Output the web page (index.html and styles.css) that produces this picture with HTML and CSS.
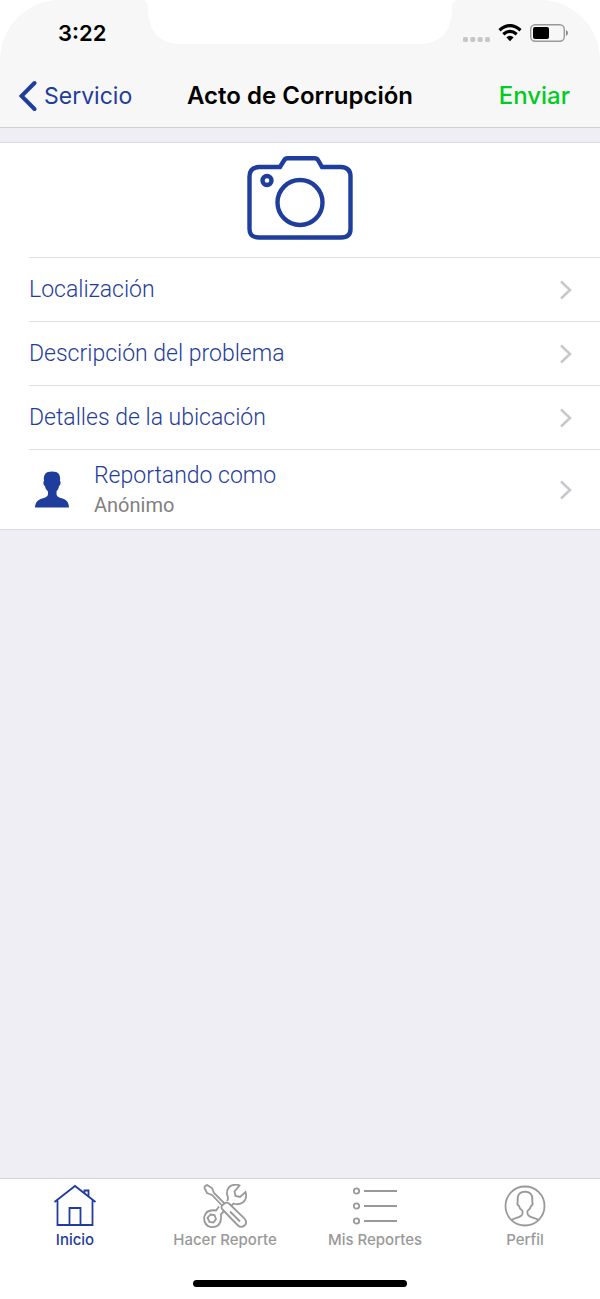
FILE: index.html
```html
<!DOCTYPE html>
<html lang="es">
<head>
<meta charset="utf-8">
<meta name="viewport" content="width=device-width, initial-scale=1">
<title>Acto de Corrupción</title>
<link rel="stylesheet" href="styles.css">
</head>
<body>
<header class="header">
  <svg class="notch" width="320" height="44" viewBox="0 0 320 44" aria-hidden="true"><path d="M0 0C6 0 8 3 8 9C8 30 19 44 40 44H280C301 44 312 30 312 9C312 3 314 0 320 0Z" fill="#fff"/></svg>
  <div class="status">
    <span class="time">3:22</span>
    <div class="indicators">
      <svg width="28" height="26" viewBox="0 0 28 26" fill="#c7c7c7" aria-hidden="true"><rect x="1" y="17" width="5" height="5" rx="1.5"/><rect x="8.3" y="17" width="5" height="5" rx="1.5"/><rect x="15.600" y="17" width="5" height="5" rx="1.5"/><rect x="23" y="17" width="5" height="5" rx="1.5"/></svg>
      <svg width="24" height="18" viewBox="0 0 24 18" fill="none" stroke="#000" stroke-width="3.2" aria-hidden="true"><path d="M1.5 6.2Q12-3 22.500 6.200M5.300 10.200Q12 4.600 18.700 10.200"/><path d="M8.300 13.300Q12 10.200 15.700 13.300L12 17.200Z" fill="#000" stroke="none"/></svg>
      <svg width="38" height="18" viewBox="0 0 38 18" aria-hidden="true"><rect x=".7" y=".7" width="33.600" height="16.600" rx="4.500" fill="none" stroke="#999" stroke-width="1.400"/><rect x="3" y="3" width="16" height="12" rx="2"/><path d="M36 6Q38 7 38 9T36 12Z" fill="#888"/></svg>
    </div>
  </div>
  <nav class="navbar">
    <a class="back" href="#"><svg width="18" height="32" viewBox="0 0 18 32" fill="none" stroke="#1f3d9c" stroke-width="4" stroke-linecap="round" stroke-linejoin="miter" aria-hidden="true"><path d="M15.500 3L2.500 16L15.500 29"/></svg>Servicio</a>
    <h1 class="title">Acto de Corrupción</h1>
    <button class="send" type="button">Enviar</button>
  </nav>
</header>
<main class="content">
  <section class="form">
    <button class="photo" type="button" aria-label="Agregar foto">
      <svg width="106" height="84" viewBox="0 0 106 84" fill="none" stroke="#1f3d9c" stroke-width="4.400" aria-hidden="true"><path d="M12 11H33L37 4.500Q38.300 2.300 40.500 2.300H67.500Q70 2.300 71.300 4.500L75 11H94Q103.500 11.500 103.500 20.500V73Q103.500 81.500 94 81.500H12Q2.500 81.500 2.500 73V20.500Q2.500 11.500 12 11Z"/><circle cx="53" cy="46.500" r="22.500"/><circle cx="20" cy="24.500" r="4.500"/></svg>
    </button>
    <ul class="list">
      <li><a class="row" href="#"><span class="label">Localización</span><svg class="chevron" viewBox="0 0 12 20" aria-hidden="true"><path d="M1 1.500L10 10L1 18.500"/></svg></a></li>
      <li><a class="row" href="#"><span class="label">Descripción del problema</span><svg class="chevron" viewBox="0 0 12 20" aria-hidden="true"><path d="M1 1.500L10 10L1 18.500"/></svg></a></li>
      <li><a class="row" href="#"><span class="label">Detalles de la ubicación</span><svg class="chevron" viewBox="0 0 12 20" aria-hidden="true"><path d="M1 1.500L10 10L1 18.500"/></svg></a></li>
      <li><a class="row row-user" href="#">
        <svg width="46" height="38" viewBox="0 0 46 38" fill="#1f3d9c" aria-hidden="true"><path d="M6 36.500C6.300 31 9 29 13 27.600C17 26.300 19 25.500 19 23V20.500C17 18.500 16.200 17 16 15C14.300 14.500 14 10.500 15 10C14.300 3.500 16.500 .5 23 .5S31.700 3.500 31 10C32 10.500 31.700 14.500 30 15C29.800 17 29 18.500 27.500 20.500V23C27.500 25.500 29.500 26.300 33.500 27.600C37.500 29 39.700 31 40 36.500Z"/></svg>
        <span class="person"><span class="label">Reportando como</span><span class="sub">Anónimo</span></span>
        <svg class="chevron" viewBox="0 0 12 20" aria-hidden="true"><path d="M1 1.500L10 10L1 18.500"/></svg></a></li>
    </ul>
  </section>
</main>
<footer class="footer">
  <nav class="tabs">
    <a class="tab active" href="#" aria-current="page"><svg width="44" height="44" viewBox="0 0 44 44" aria-hidden="true"><path d="M1.500 18L22 2L42.500 18M4.500 16.500V41H39.500V16.500M16.500 41V24H27.500V41M31.500 9V6.500H35.500V12" stroke-width="1.800"/></svg>Inicio</a>
    <a class="tab" href="#"><svg width="44" height="44" viewBox="0 0 44 44" aria-hidden="true"><path d="M1 3L4 1L9 4L11 9L21.500 19.500M1 3L4 9L9 11L19 21.500M19 21.500Q17.500 24 20 26L34.500 41Q38 44.500 41.500 41.500T41 34L26.500 20Q24 17.500 21.500 19.500ZM27 27.500L37 37.500M24 17Q26 14.500 24 10.500Q23.500 2 31 .8Q34 .3 36.500 1.500L31.500 7.500L32.500 12L37 13L42.500 8Q44.500 14 40.500 18Q36 21.500 30.500 19.500L29 21M16 22.500L13 26.500Q3 25 1.200 33Q.5 41 7.500 43Q17.500 44 18 34V30L21 27M7.500 30.500L11.500 31L13 35L10.500 38.500L6.500 38L4.500 34Z"/></svg>Hacer Reporte</a>
    <a class="tab" href="#"><svg width="44" height="44" viewBox="0 0 44 44" aria-hidden="true"><circle cx="3.500" cy="7" r="2.700"/><circle cx="3.500" cy="22" r="2.700"/><circle cx="3.500" cy="37" r="2.700"/><path d="M11 7H44M11 22H44M11 37H44"/></svg>Mis Reportes</a>
    <a class="tab" href="#"><svg width="44" height="44" viewBox="0 0 44 44" aria-hidden="true"><circle cx="22" cy="22" r="19.500"/><path d="M8.500 36C12 33.500 19.500 33.500 19.500 29.500V27Q16.500 25 16 22Q13.500 21 14.700 17.500Q13.500 8 22 7.700Q30.500 8 29.300 17.500Q30.500 21 28 22Q27.500 25 24.500 27V29.500C24.500 33.500 32 33.500 35.500 36"/></svg>Perfil</a>
  </nav>
  <div class="home-bar"></div>
</footer>
</body>
</html>
```
FILE: styles.css
```css
* { box-sizing: border-box; }

body {
  margin: 0;
  min-height: 100vh;
  display: flex;
  flex-direction: column;
  background: #fff;
  color: #000;
  font-family: Inter, "Liberation Sans", sans-serif;
}

a { color: inherit; text-decoration: none; }

button {
  padding: 0;
  border: 0;
  background: none;
  font: inherit;
  cursor: pointer;
}

svg { display: block; flex: none; }

.header {
  position: relative;
  background: #f7f7f7;
  border-bottom: 1px solid #cfcfd3;
  border-radius: 60px 60px 0 0;
}

.notch {
  position: absolute;
  top: 0;
  left: 50%;
  margin-left: -160px;
}

.status {
  height: 64px;
  padding: 2px 32px 0 58px;
  display: flex;
  align-items: center;
  justify-content: space-between;
}

.time { font-size: 22px; font-weight: 600; }

.indicators { display: flex; align-items: center; gap: 8px; }

.navbar {
  height: 63px;
  padding: 0 30px 0 19px;
  display: flex;
  align-items: center;
  font-size: 23px;
}

.back {
  flex: 1;
  display: flex;
  align-items: center;
  gap: 7px;
  margin-right: 11px;
  color: #1f3d9c;
}

.title { margin: 0; font-size: 24px; font-weight: 600; }

.send {
  flex: 1;
  color: #00cc22;
  font-size: 24px;
  font-weight: 500;
  text-align: right;
}

.back, .send { flex-basis: 0; }

.navbar { padding-left: 19px; }

.content { flex: 1; padding-top: 14px; background: #efeef4; }

.form {
  background: #fff;
  border-top: 1px solid #dddde1;
  border-bottom: 1px solid #dddde1;
}

.photo {
  width: 100%;
  padding: 13px 0 17px;
  display: flex;
  justify-content: center;
}

.list { margin: 0; padding: 0 0 0 29px; list-style: none; }

.row {
  min-height: 64px;
  padding-right: 28px;
  display: flex;
  align-items: center;
  justify-content: space-between;
  border-top: 1px solid #e0e0e2;
  color: #1f3d9c;
  font-family: Roboto, "Liberation Sans", sans-serif;
  font-size: 23px;
  font-weight: 300;
}

.row-user { min-height: 80px; }

.person {
  flex: 1;
  margin-left: 19px;
  display: flex;
  flex-direction: column;
  line-height: 30px;
}

.sub { color: #808080; font-size: 20px; font-weight: 400; line-height: 28px; }

.chevron {
  width: 12px;
  height: 20px;
  fill: none;
  stroke: #c7c7cc;
  stroke-width: 2.500;
}

.footer { background: #fff; border-top: 1px solid #d5d5d8; }

.tabs { display: grid; grid-template-columns: repeat(4, 1fr); padding-top: 5px; }

.tab {
  display: flex;
  flex-direction: column;
  align-items: center;
  gap: 2px;
  color: #999;
  font-size: 15px;
  font-weight: 500;
  line-height: 20px;
}

.tab svg { fill: none; stroke: currentColor; stroke-width: 1.800; }

.active { color: #1f3d9c; }

.home-bar {
  width: 214px;
  height: 7px;
  margin: 30px auto 12px;
  border-radius: 4px;
  background: #000;
}
```
